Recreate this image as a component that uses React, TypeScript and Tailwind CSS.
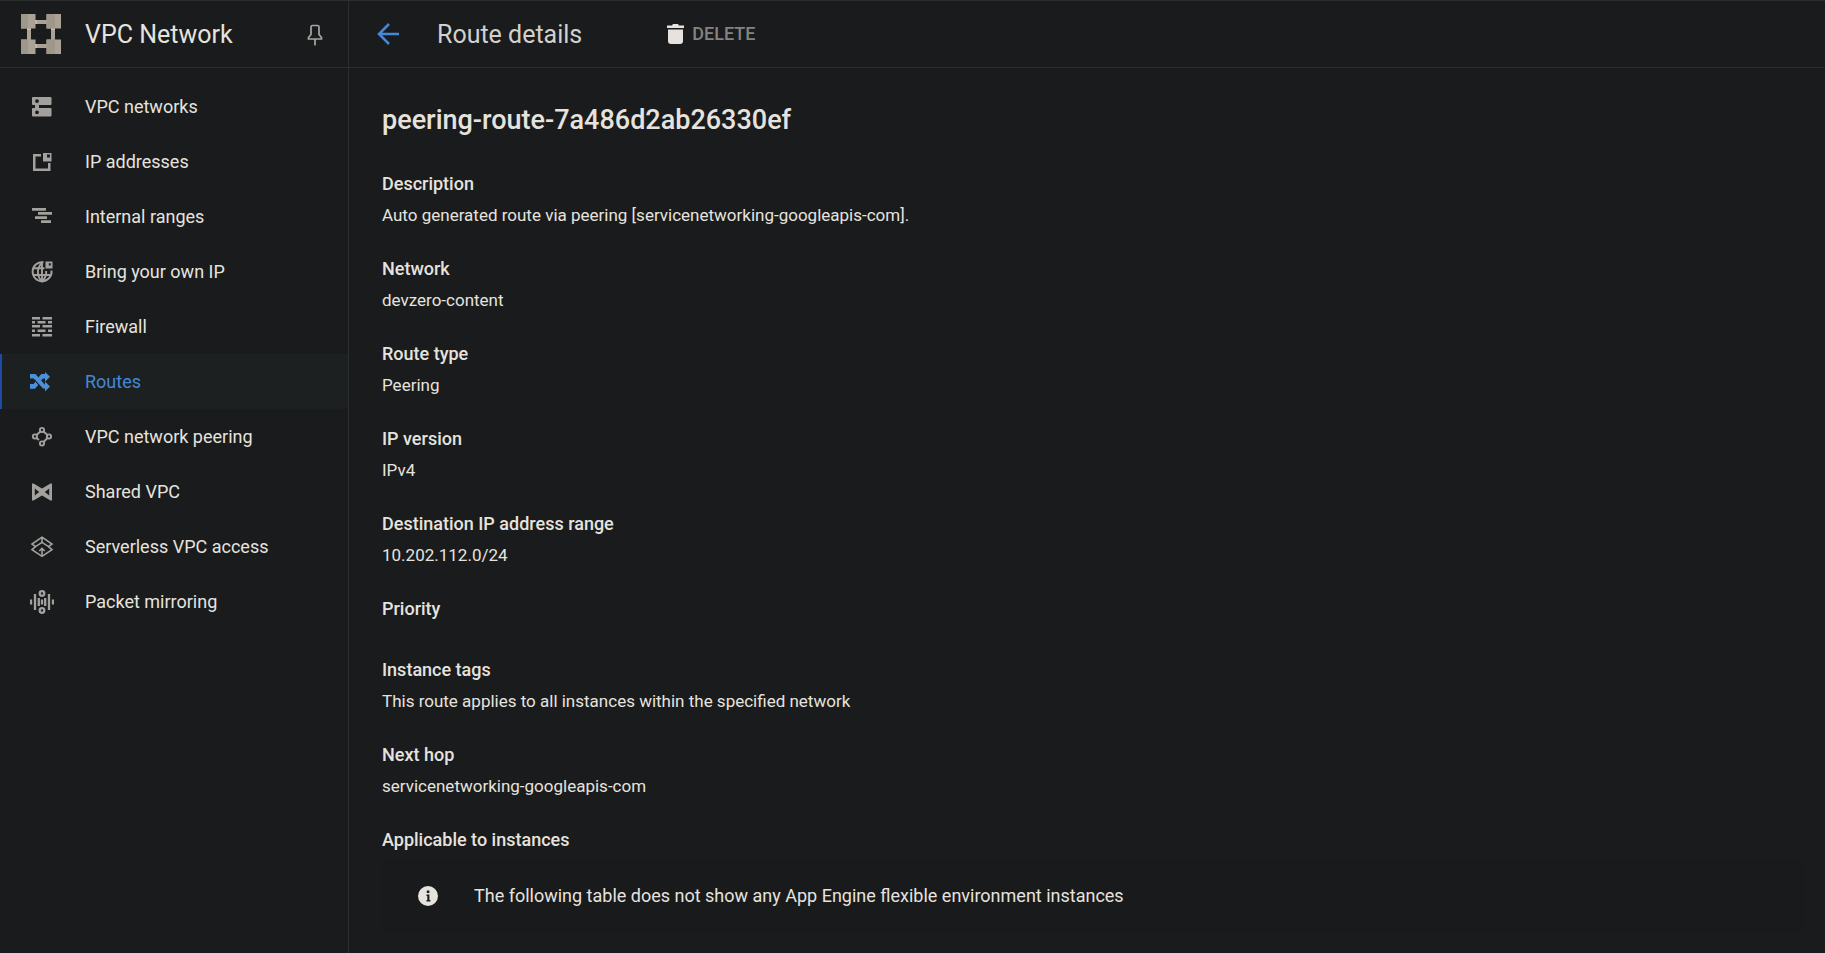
import type { ReactNode } from "react";

type NavItem = { label: string; icon: ReactNode; active?: boolean };
type Detail = { term: string; value?: string };

function Glyph({ children, stroke = false }: { children: ReactNode; stroke?: boolean }) {
  return (
    <svg
      viewBox="0 0 24 24"
      aria-hidden="true"
      className="size-6 shrink-0"
      fill={stroke ? "none" : "currentColor"}
      stroke={stroke ? "currentColor" : "none"}
    >
      {children}
    </svg>
  );
}

const navItems: NavItem[] = [
  {
    label: "VPC networks",
    icon: (
      <Glyph>
        <path
          fillRule="evenodd"
          d="M3 2h17.500a1 1 0 0 1 1 1v6a1 1 0 0 1-1 1H9v3h11.500a1 1 0 0 1 1 1v6.500a1 1 0 0 1-1 1H3a1 1 0 0 1-1-1V14a1 1 0 0 1 1-1h2V10H3a1 1 0 0 1-1-1V3a1 1 0 0 1 1-1zM7 4.200a1.900 1.900 0 1 0 0 3.800a1.900 1.900 0 0 0 0-3.800zM7 15.400a1.900 1.900 0 1 0 0 3.800a1.900 1.900 0 0 0 0-3.800z"
        />
      </Glyph>
    ),
  },
  {
    label: "IP addresses",
    icon: (
      <Glyph>
        <path d="M3 4h8v2.500H5.500v12H18V13h2.500v8H3z" />
        <path fillRule="evenodd" d="M13 3h8.500v8.500H13zM17 4.500V7.500h3V4.500z" />
      </Glyph>
    ),
  },
  {
    label: "Internal ranges",
    icon: (
      <Glyph>
        <path d="M2 3h14v2.700H2zM8 7h14v2.700H8zM5 11.300h12V14H5zM11 15.300h10V18H11z" />
      </Glyph>
    ),
  },
  {
    label: "Bring your own IP",
    icon: (
      <Glyph>
        <g fill="none" stroke="currentColor" strokeWidth="1.900">
          <path d="M13.500 2.300A9.500 9.500 0 1 0 21.500 10.500" />
          <path d="M12.500 2.300C6.500 8 6.500 16 12 21.500C15.500 18 16.500 15 16.200 11M3.500 8.300H14.500M3 15H21M12 2.500v19" />
        </g>
        <path fillRule="evenodd" d="M15.500 1.500H22.500V8.500h-7zM18.800 3.200v2.400h2V3.200z" />
      </Glyph>
    ),
  },
  {
    label: "Firewall",
    icon: (
      <Glyph>
        <path d="M2 2h8v2.500H2zM12.500 2H22v2.500h-9.500zM2 6h3v2.500H2zM7.500 6h8v2.500h-8zM18 6h4v2.500h-4zM2 10h8v2.500H2zM12.500 10H22v2.500h-9.500zM2 14.500h3V17H2zM7.500 14.500h8V17h-8zM18 14.500h4V17h-4zM2 19h8v2.500H2zM12.500 19H22v2.500h-9.500z" />
      </Glyph>
    ),
  },
  {
    label: "Routes",
    active: true,
    icon: (
      <Glyph>
        <path d="M0 4h5.500l9.200 10.500H15V11.500l5 5l-5 5v-3h-2L3.800 8.500H0z" />
        <path d="M15 2l5 4.700l-5 5V8.500h-2l-2 2.200l-2.700-3.200L11.300 4H15zM0 14h3.500l2-2.200l2.700 3.100L5 18.800H0z" />
      </Glyph>
    ),
  },
  {
    label: "VPC network peering",
    icon: (
      <Glyph stroke>
        <g strokeWidth="1.900">
          <circle cx="12" cy="5" r="2.100" />
          <circle cx="4.900" cy="11.500" r="2.100" />
          <circle cx="19" cy="11.500" r="2.100" />
          <circle cx="12" cy="18.500" r="2.100" />
          <path d="M10.500 6.500L6.400 10M13.500 6.500l4 3.500M17.500 13l-4 4M6.400 13l2.600 2" />
        </g>
      </Glyph>
    ),
  },
  {
    label: "Shared VPC",
    icon: (
      <Glyph>
        <path
          fillRule="evenodd"
          d="M2 3.500h1.500L12 8.500l8.500-5H22v17h-1.500L12 15.500l-8.500 5H2zM4.800 8.500v7l4.400-3.500zM19.200 8.500v7l-4.400-3.500z"
        />
      </Glyph>
    ),
  },
  {
    label: "Serverless VPC access",
    icon: (
      <Glyph stroke>
        <g strokeWidth="1.600">
          <path d="M12 2.200L22 9l-3.500 2.600L12 7.400l-6.500 4.200L2 9z" />
          <path d="M12 2.200v5.200M5.500 11.600L2 14.600l10 6.800l10-6.800l-3.500-3M12 21v-7M9.300 16L12 13.300L14.700 16" />
        </g>
      </Glyph>
    ),
  },
  {
    label: "Packet mirroring",
    icon: (
      <Glyph stroke>
        <g strokeWidth="2.300">
          <circle cx="12" cy="3.500" r="2.300" />
          <circle cx="12" cy="20.500" r="2.300" />
          <path d="M1 9.500v5M5 4v16M8.800 8v8M12 9.500v5M15.200 8v8M19 4v16M23 9.500v5" />
        </g>
      </Glyph>
    ),
  },
];

const details: Detail[] = [
  { term: "Description", value: "Auto generated route via peering [servicenetworking-googleapis-com]." },
  { term: "Network", value: "devzero-content" },
  { term: "Route type", value: "Peering" },
  { term: "IP version", value: "IPv4" },
  { term: "Destination IP address range", value: "10.202.112.0/24" },
  { term: "Priority" },
  { term: "Instance tags", value: "This route applies to all instances within the specified network" },
  { term: "Next hop", value: "servicenetworking-googleapis-com" },
];

function Logo() {
  return (
    <svg viewBox="0 0 40 40" aria-hidden="true" className="size-10 shrink-0">
      <path fill="#aba296" d="M14 6h12v4H14zM14 30h12v4H14zM6 14h4v12H6zM30 14h4v12h-4z" />
      <path fill="#c5beb4" d="M14 6h2v4h-2zM14 30h2v4h-2zM6 14h4v2H6zM30 14h4v2h-4z" />
      <path fill="#aba296" d="M0 0h14.500v14.500H0zM25.500 0H40v14.500H25.500zM0 25.500h14.500V40H0zM25.500 25.500H40V40H25.500z" />
      <path fill="#9f978a" d="M0 0h7v14.500H0zM25.500 0H34v14.500h-8.500zM0 25.500h7V40H0zM25.500 25.500H34V40h-8.500z" />
    </svg>
  );
}

function Sidebar() {
  return (
    <aside className="w-[349px] shrink-0 border-r border-[#2b2d2f]">
      <div className="flex h-[67px] items-center border-b border-[#2b2d2f] pr-[25px] pl-[21px]">
        <Logo />
        <h2 className="ml-6 flex-1 pt-0.5 text-[25px]">VPC Network</h2>
        <button type="button" aria-label="Pin menu" className="pt-0.5 text-[#a8a6a2]">
          <svg viewBox="0 0 16 22" fill="none" stroke="currentColor" strokeWidth="1.700" className="h-[22px] w-4">
            <path d="M4 10.500V3q0-1.500 1.500-1.500h5Q12 1.500 12 3v7.500l2.500 3V15h-13v-1.500zM8 15v6.500" />
          </svg>
        </button>
      </div>
      <nav className="pt-[11px]">
        {navItems.map((item) => (
          <a
            key={item.label}
            href="#"
            aria-current={item.active ? "page" : undefined}
            className={
              item.active
                ? "flex h-[55px] items-center gap-[31px] border-l-2 border-[#1f4ba5] bg-[#1c2021] pl-7 text-lg text-[#4489d8]"
                : "flex h-[55px] items-center gap-[31px] border-l-2 border-transparent pl-7 text-lg"
            }
          >
            <span className={item.active ? "text-[#4a90dd]" : "text-[#a3a19d]"}>{item.icon}</span>
            {item.label}
          </a>
        ))}
      </nav>
    </aside>
  );
}

export default function App() {
  return (
    <div className="flex min-h-screen border-t border-[#2b2d2f] bg-[#1a1b1d] font-['Roboto',sans-serif] text-[#e6e3df]">
      <Sidebar />
      <main className="flex-1">
        <header className="flex h-[67px] items-center border-b border-[#2b2d2f] pl-7">
          <a href="#" aria-label="Back" className="text-[#4489d8]">
            <svg viewBox="0 0 22 22" fill="none" stroke="currentColor" strokeWidth="2.500" className="size-[22px]">
              <path d="M22 11H2M12 1L2 11l10 10" />
            </svg>
          </a>
          <h1 className="ml-[38px] pt-0.5 text-[25px] text-[#d4d1cc]">Route details</h1>
          <button type="button" className="ml-[85px] flex items-center gap-2 text-lg font-medium text-[#858380]">
            <svg viewBox="0 0 17 20" fill="#e6e3df" aria-hidden="true" className="h-5 w-[17px]">
              <path d="M0 1.500h5l1-1.500h5l1 1.500h5v2.500H0zM1 5.500h15V17a3 3 0 0 1-3 3H4a3 3 0 0 1-3-3z" />
            </svg>
            DELETE
          </button>
        </header>
        <div className="pt-8 pr-5 pl-[33px]">
          <h2 className="text-[27px] leading-10 font-medium">peering-route-7a486d2ab26330ef</h2>
          <dl className="mt-8">
            {details.map((d) => (
              <div key={d.term} className={d.value ? "pb-[30px]" : "pb-[37px]"}>
                <dt className="text-lg leading-6 font-medium">{d.term}</dt>
                {d.value && <dd className="mt-[7px] text-[17px] leading-6">{d.value}</dd>}
              </div>
            ))}
          </dl>
          <h3 className="text-lg leading-6 font-medium">Applicable to instances</h3>
          <div className="mt-2 flex h-[72px] items-center gap-9 bg-[#191a1b] pl-9">
            <svg viewBox="0 0 20 20" aria-hidden="true" className="size-5">
              <circle cx="10" cy="10" r="10" fill="#e6e3df" />
              <path fill="#191a1b" d="M8.800 4.500h2.600v2.500H8.800zM8.500 8.500h2.900v5.500h1v1.500H8.500V14h.8v-4h-.8z" />
            </svg>
            <p className="text-lg">The following table does not show any App Engine flexible environment instances</p>
          </div>
        </div>
      </main>
    </div>
  );
}
